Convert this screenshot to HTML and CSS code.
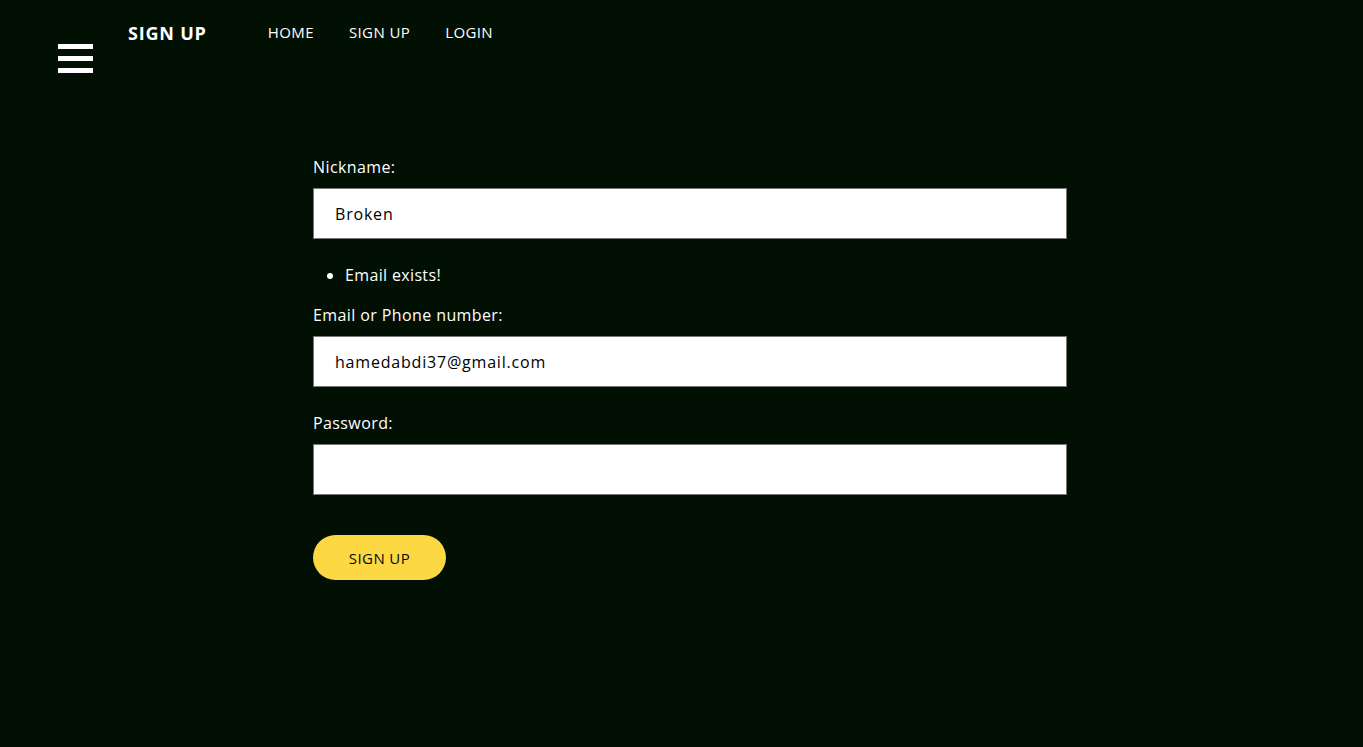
FILE: index.html
```html
<!DOCTYPE html>
<html lang="en">
<head>
<meta charset="utf-8">
<title>Sign up</title>
<link rel="stylesheet" href="styles.css">
</head>
<body>
<header class="topbar">
  <button class="burger" aria-label="Menu">
    <span></span><span></span><span></span>
  </button>
  <div class="brand">SIGN UP</div>
  <nav class="nav">
    <a href="#">HOME</a>
    <a href="#">SIGN UP</a>
    <a href="#">LOGIN</a>
  </nav>
</header>
<main class="main">
  <form class="form">
    <label class="label" for="nick">Nickname:</label>
    <input class="field" id="nick" type="text" value="Broken">
    <ul class="errors"><li>Email exists!</li></ul>
    <label class="label" for="email">Email or Phone number:</label>
    <input class="field" id="email" type="text" value="hamedabdi37@gmail.com">
    <label class="label label-gap" for="pw">Password:</label>
    <input class="field" id="pw" type="password">
    <button class="submit" type="button">SIGN UP</button>
  </form>
</main>
</body>
</html>
```
FILE: styles.css
```css
* { box-sizing: border-box; }
html, body { margin: 0; padding: 0; }
body {
  background: #020f03;
  color: #ffffff;
  font-family: "Open Sans", "DejaVu Sans", sans-serif;
  min-height: 747px;
}
.topbar {
  display: flex;
  align-items: flex-start;
  padding: 0 0 0 58px;
  height: 120px;
}
.burger {
  margin-top: 44px;
  width: 35px;
  padding: 0;
  border: 0;
  background: none;
  display: flex;
  flex-direction: column;
  gap: 7px;
}
.burger span {
  display: block;
  height: 5px;
  background: #ffffff;
}
.brand {
  margin-left: 35px;
  margin-top: 21px;
  font-weight: 700;
  font-size: 18px;
  line-height: 24px;
  letter-spacing: 0.8px;
}
.nav {
  margin-left: 61px;
  margin-top: 22px;
  display: flex;
  gap: 35px;
}
.nav a {
  color: #ffffff;
  text-decoration: none;
  font-size: 15px;
  line-height: 20px;
  letter-spacing: 0.4px;
}
.main {
  padding-left: 313px;
  padding-top: 37px;
}
.form {
  width: 754px;
  display: flex;
  flex-direction: column;
  align-items: flex-start;
}
.label {
  font-size: 16px;
  line-height: 20px;
  letter-spacing: 0.4px;
  margin-bottom: 11px;
}
.label-gap { margin-top: 26px; }
.field {
  width: 754px;
  height: 51px;
  border: 1px solid #767676;
  background: #ffffff;
  padding: 0 21px;
  font-family: inherit;
  font-size: 16px;
  letter-spacing: 0.8px;
  color: #000000;
  outline: none;
}
.errors {
  margin: 26px 0 20px;
  padding-left: 32px;
  font-size: 16px;
  line-height: 20px;
  letter-spacing: 0.35px;
}
.submit {
  margin-top: 40px;
  width: 133px;
  height: 45px;
  border: 0;
  border-radius: 23px;
  background: #fcd843;
  color: #0a0a0a;
  font-family: inherit;
  font-size: 15px;
  letter-spacing: 0.4px;
}
```
